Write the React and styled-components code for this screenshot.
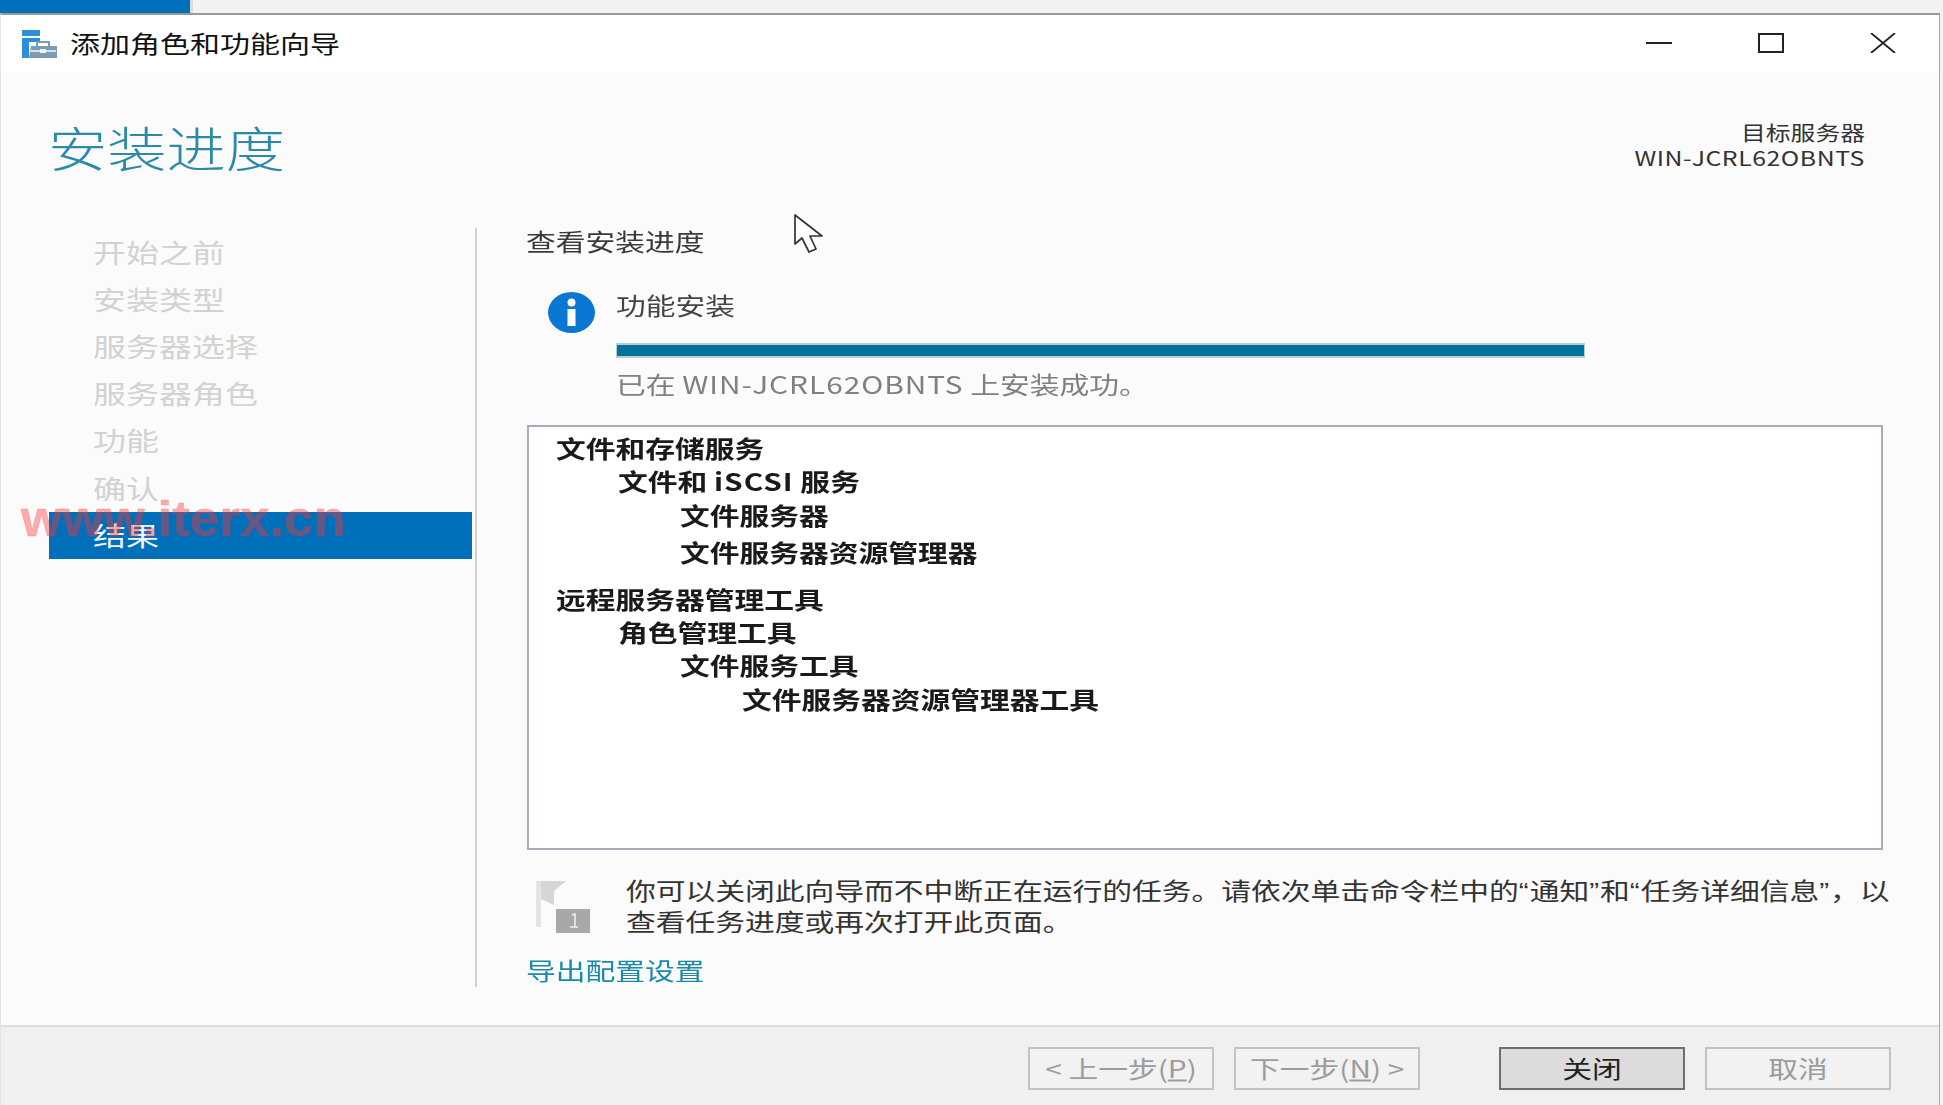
import React from "react"
import styled, { createGlobalStyle, css } from "styled-components"

const GlobalStyle = createGlobalStyle`
    html, body {
        margin: 0;
        padding: 0;
        background: #f3f3f3;
        font-family: "Noto Sans CJK SC", "Liberation Sans", sans-serif;
    }
`

// the capture is stretched sideways, so the text is too
const wide = css`
    display: block;
    white-space: nowrap;
    transform: translateY(-1.5px) scaleX(1.24);
    transform-origin: left center;
`

const Page = styled.div`
    position: relative;
    width: 1943px;
    height: 1105px;
    overflow: hidden;
    display: flex;
    flex-direction: column;
    filter: blur(0.6px);
`

const TaskStrip = styled.div`
    height: 13px;
    flex: none;
    background: #f3f3f3;
`

const TaskTab = styled.div`
    width: 190px;
    height: 13px;
    background: #0070bb;
    border-right: 3px solid #dcdcdc;
`

const Window = styled.div`
    flex: 1;
    width: 1938px;
    display: flex;
    flex-direction: column;
    background: #fbfbfb;
    border-top: 2px solid #9a9a9a;
    border-left: 1px solid #e4e4e4;
    border-right: 1px solid #a8a8a8;
`

const TitleBar = styled.div`
    height: 57px;
    flex: none;
    display: flex;
    align-items: center;
    background: #fff;
    padding-left: 20px;
`

const TitleText = styled.span`
    ${wide}
    margin-left: 12px;
    font-size: 24.2px;
    line-height: 30px;
    color: #111;
`

const WindowButtons = styled.div`
    display: flex;
    margin: -2px 43px 0 auto;
    gap: 86px;
    align-items: center;
`

const Main = styled.div`
    flex: 1;
    display: flex;
    flex-direction: column;
`

const Header = styled.div`
    height: 156px;
    flex: none;
    display: flex;
    justify-content: space-between;
    padding: 0 74px 0 47px;
`

const Heading = styled.h1`
    ${wide}
    margin: 46px 0 0;
    font-size: 47.8px;
    line-height: 60px;
    font-weight: 300;
    color: #2a8aa8;
`

const Target = styled.div`
    margin-top: 49px;
    display: flex;
    flex-direction: column;
    align-items: flex-end;
`

const TargetLine = styled.span`
    ${wide}
    transform-origin: right center;
    font-size: 20px;
    line-height: 25px;
    color: #333;
    letter-spacing: ${p => p.$spaced ? "0.45px" : "0"};
`

const Columns = styled.div`
    display: flex;
    height: 759px;
`

const Sidebar = styled.nav`
    width: 426px;
    flex: none;
    margin-left: 48px;
    padding-top: 1.5px;
    border-right: 2px solid #cfcfcf;
`

const NavItem = styled.div`
    width: 423px;
    height: 47.1px;
    display: flex;
    align-items: center;
    padding-left: 44px;
    box-sizing: border-box;
    background: ${p => p.$active ? "#0070bb" : "transparent"};
`

const NavLabel = styled.span`
    ${wide}
    font-size: 26.6px;
    line-height: 32px;
    color: ${p => p.$active ? "#f2f6fa" : "#d2d2d2"};
`

const Content = styled.div`
    flex: 1;
    padding: 0 56px 0 49px;
    display: flex;
    flex-direction: column;
`

const SectionTitle = styled.div`
    ${wide}
    font-size: 24px;
    line-height: 28px;
    color: #3a3a3a;
`

const Progress = styled.div`
    display: flex;
    gap: 21px;
    margin-top: 35px;
    padding-left: 22px;
`

const ProgressBody = styled.div`
    flex: 1;
    display: flex;
    flex-direction: column;
`

const ProgressLabel = styled.div`
    ${wide}
    font-size: 24px;
    line-height: 30px;
    color: #444;
`

const Bar = styled.div`
    width: 969px;
    height: 15px;
    margin-top: 22px;
    box-sizing: border-box;
    background: #00739a;
    border: 2px solid #b8ced6;
    border-width: 2px 1px;
`

const Status = styled.div`
    ${wide}
    margin-top: 12px;
    font-size: 24px;
    line-height: 30px;
    color: #808080;
`

const Latin = styled.span`
    letter-spacing: 0.8px;
`

const Quote = styled.span`
    font-family: "Liberation Sans", sans-serif;
    letter-spacing: 0.75px;
    line-height: 0;
`

const ListBox = styled.div`
    height: 425px;
    margin: 25px 0 0 1px;
    padding-top: 5px;
    box-sizing: border-box;
    background: #fff;
    border: 2px solid #a6adbb;
`

const ListRow = styled.div`
    ${wide}
    margin-left: ${p => 27 + p.$level * 62}px;
    margin-top: ${p => p.$gap || 0}px;
    font-size: 24px;
    line-height: 33.4px;
    font-weight: 700;
    color: #1a1a1a;
`

const Note = styled.div`
    display: flex;
    margin-top: 25px;
    padding-left: 10px;
    gap: 36px;
`

const NoteText = styled.div`
    ${wide}
    font-size: 24px;
    line-height: 31px;
    color: #333;
`

const ExportLink = styled.a`
    ${wide}
    margin-top: 19px;
    font-size: 24px;
    line-height: 30px;
    color: #1b8aa8;
`

const Footer = styled.div`
    margin-top: auto;
    height: 80px;
    flex: none;
    box-sizing: border-box;
    display: flex;
    justify-content: flex-end;
    padding: 20px 48px 0 0;
    gap: 20px;
    background: #f0f0f0;
    border-top: 2px solid #dedede;
`

const Button = styled.div`
    width: 186px;
    height: 43px;
    box-sizing: border-box;
    display: flex;
    align-items: center;
    justify-content: center;
    margin-left: ${p => p.$apart ? "59px" : "0"};
    border: 2px solid ${p => p.$primary ? "#6e6e6e" : "#bcc3c9"};
    background: ${p => p.$primary ? "#dcdcdc" : "#f2f2f2"};
`

const ButtonLabel = styled.span`
    ${wide}
    transform-origin: center;
    font-size: 24px;
    line-height: 30px;
    color: ${p => p.$primary ? "#222" : "#9c9c9c"};

    u {
        text-underline-offset: 2px;
    }
`

const Cursor = styled.svg`
    position: absolute;
    left: 793px;
    top: 213px;
`

const Watermark = styled.div`
    position: absolute;
    left: 21px;
    top: 489px;
    font-family: "Liberation Sans", sans-serif;
    font-size: 50px;
    line-height: 60px;
    font-weight: 700;
    white-space: nowrap;
    color: rgba(255, 50, 50, 0.4);
    -webkit-text-stroke: 0.8px rgba(255, 50, 50, 0.2);
    transform: scaleX(1.06);
    transform-origin: left center;
`

const navItems = ["开始之前", "安装类型", "服务器选择", "服务器角色", "功能", "确认", "结果"]

const listRows = [
    { id: "a", text: "文件和存储服务", level: 0 },
    { id: "b", text: <>文件和 <Latin>iSCSI</Latin> 服务</>, level: 1 },
    { id: "c", text: "文件服务器", level: 2 },
    { id: "d", text: "文件服务器资源管理器", level: 2, gap: 4 },
    { id: "e", text: "远程服务器管理工具", level: 0, gap: 13 },
    { id: "f", text: "角色管理工具", level: 1 },
    { id: "g", text: "文件服务工具", level: 2 },
    { id: "h", text: "文件服务器资源管理器工具", level: 3 },
]

const AppIcon = () => (
    <svg width="37" height="30" viewBox="0 0 37 30">
        <rect x="1" y="1" width="18" height="6" fill="#2b8fe0" />
        <rect x="1" y="9" width="7" height="20" fill="#2b8fe0" />
        <rect x="8" y="9" width="11" height="4" fill="#2b8fe0" />
        <path d="M10 17 H36 V29 H8 Z" fill="#7d9cb4" />
        <path d="M16 17 V13 H28 V17" fill="none" stroke="#7d9cb4" strokeWidth="2" />
        <rect x="9" y="21" width="26" height="2" fill="#d5e0e8" />
        <rect x="19" y="20" width="6" height="4" fill="#eef3f6" />
    </svg>
)

const MinimizeIcon = () => (
    <svg width="26" height="20" viewBox="0 0 26 20">
        <path d="M0 10 H26" stroke="#222" strokeWidth="2" />
    </svg>
)

const MaximizeIcon = () => (
    <svg width="26" height="20" viewBox="0 0 26 20">
        <rect x="1" y="1" width="24" height="18" fill="none" stroke="#222" strokeWidth="2" />
    </svg>
)

const CloseIcon = () => (
    <svg width="26" height="20" viewBox="0 0 26 20">
        <path d="M1 0 L25 20 M25 0 L1 20" stroke="#222" strokeWidth="1.8" />
    </svg>
)

const InfoIcon = () => (
    <svg width="47" height="47" viewBox="0 0 47 47" style={{ flex: "none", marginTop: "-2px" }}>
        <ellipse cx="23.5" cy="20.5" rx="23.5" ry="20.5" transform="translate(0 3)" fill="#0a78d2" />
        <circle cx="23.5" cy="13.5" r="4" fill="#fff" />
        <rect x="19.5" y="20" width="8" height="17" fill="#fff" />
    </svg>
)

const FlagIcon = () => (
    <svg width="54" height="52" viewBox="0 0 54 52" style={{ flex: "none", marginTop: "6px" }}>
        <rect x="0" y="0" width="5" height="46" fill="#e4e4e4" />
        <path d="M5 0 H30 L18 10 V24 L5 18 Z" fill="#d6d6d6" />
        <rect x="20" y="28" width="34" height="24" fill="#a8a8a8" />
        <path d="M36 34 L39 33 V46 M34 46 H42" fill="none" stroke="#eee" strokeWidth="1.6" />
    </svg>
)

export default () => {
    return (
        <Page>
            <GlobalStyle />
            <TaskStrip><TaskTab /></TaskStrip>

            <Window>
                <TitleBar>
                    <AppIcon />
                    <TitleText>添加角色和功能向导</TitleText>
                    <WindowButtons>
                        <MinimizeIcon />
                        <MaximizeIcon />
                        <CloseIcon />
                    </WindowButtons>
                </TitleBar>

                <Main>
                    <Header>
                        <Heading>安装进度</Heading>
                        <Target>
                            <TargetLine>目标服务器</TargetLine>
                            <TargetLine $spaced>WIN-JCRL62OBNTS</TargetLine>
                        </Target>
                    </Header>

                    <Columns>
                        <Sidebar>
                            {navItems.map(item => (
                                <NavItem key={item} $active={item === "结果"}>
                                    <NavLabel $active={item === "结果"}>{item}</NavLabel>
                                </NavItem>
                            ))}
                        </Sidebar>

                        <Content>
                            <SectionTitle>查看安装进度</SectionTitle>

                            <Progress>
                                <InfoIcon />
                                <ProgressBody>
                                    <ProgressLabel>功能安装</ProgressLabel>
                                    <Bar />
                                    <Status>已在 <Latin>WIN-JCRL62OBNTS</Latin> 上安装成功。</Status>
                                </ProgressBody>
                            </Progress>

                            <ListBox>
                                {listRows.map(row => (
                                    <ListRow key={row.id} $level={row.level} $gap={row.gap}>{row.text}</ListRow>
                                ))}
                            </ListBox>

                            <Note>
                                <FlagIcon />
                                <NoteText>
                                    你可以关闭此向导而不中断正在运行的任务。请依次单击命令栏中的<Quote>“</Quote>通知<Quote>”</Quote>和<Quote>“</Quote>任务详细信息<Quote>”</Quote>，以
                                    <br />
                                    查看任务进度或再次打开此页面。
                                </NoteText>
                            </Note>

                            <ExportLink>导出配置设置</ExportLink>
                        </Content>
                    </Columns>

                    <Footer>
                        <Button><ButtonLabel>&lt; 上一步(<u>P</u>)</ButtonLabel></Button>
                        <Button><ButtonLabel>下一步(<u>N</u>) &gt;</ButtonLabel></Button>
                        <Button $primary $apart><ButtonLabel $primary>关闭</ButtonLabel></Button>
                        <Button><ButtonLabel>取消</ButtonLabel></Button>
                    </Footer>
                </Main>
            </Window>

            <Cursor width="34" height="42" viewBox="0 0 34 42">
                <path d="M2 2 V31 L9 25 L16 39 L23 36 L17 23 L29 23 Z" fill="#fff" stroke="#333" strokeWidth="1.7" strokeLinejoin="round" />
            </Cursor>
            <Watermark>www.iterx.cn</Watermark>
        </Page>
    )
}
